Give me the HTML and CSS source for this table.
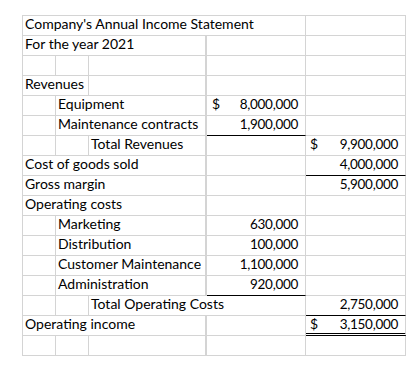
FILE: index.html
```html
<!DOCTYPE html>
<html>
<head>
<meta charset="utf-8">
<link rel="stylesheet" href="styles.css">
</head>
<body>
<div class="sheet">
  <div class="cell s4">Company's Annual Income Statement</div><div class="cell"></div>

  <div class="cell s3 c">For the year 2021</div><div class="cell"></div><div class="cell"></div>

  <div class="cell"></div><div class="cell"></div><div class="cell c"></div><div class="cell"></div><div class="cell"></div>

  <div class="cell s2">Revenues</div><div class="cell c"></div><div class="cell"></div><div class="cell"></div>

  <div class="cell"></div><div class="cell s2 c">Equipment</div><div class="cell num d"><span>$</span><span class="amt">8,000,000</span></div><div class="cell"></div>

  <div class="cell"></div><div class="cell s2 c">Maintenance contracts</div><div class="cell num d under"><span></span><span class="amt">1,900,000</span></div><div class="cell"></div>

  <div class="cell"></div><div class="cell"></div><div class="cell c ind">Total Revenues</div><div class="cell"></div><div class="cell num"><span>$</span><span class="amt">9,900,000</span></div>

  <div class="cell s3 c">Cost of goods sold</div><div class="cell"></div><div class="cell num under"><span></span><span class="amt">4,000,000</span></div>

  <div class="cell s3 c">Gross margin</div><div class="cell"></div><div class="cell num"><span></span><span class="amt">5,900,000</span></div>

  <div class="cell s3 c">Operating costs</div><div class="cell"></div><div class="cell"></div>

  <div class="cell"></div><div class="cell s2 c">Marketing</div><div class="cell num d"><span></span><span class="amt">630,000</span></div><div class="cell"></div>

  <div class="cell"></div><div class="cell s2 c">Distribution</div><div class="cell num d"><span></span><span class="amt">100,000</span></div><div class="cell"></div>

  <div class="cell"></div><div class="cell s2 c">Customer Maintenance</div><div class="cell num d"><span></span><span class="amt">1,100,000</span></div><div class="cell"></div>

  <div class="cell"></div><div class="cell s2 c">Administration</div><div class="cell num d under"><span></span><span class="amt">920,000</span></div><div class="cell"></div>

  <div class="cell"></div><div class="cell"></div><div class="cell s2 ind">Total Operating Costs</div><div class="cell num under"><span></span><span class="amt">2,750,000</span></div>

  <div class="cell s3 c">Operating income</div><div class="cell"></div><div class="cell num dbl"><span>$</span><span class="amt">3,150,000</span></div>

  <div class="cell"></div><div class="cell"></div><div class="cell c"></div><div class="cell"></div><div class="cell"></div>
</div>
</body>
</html>
```

FILE: styles.css
```css
html, body {
  margin: 0;
  padding: 0;
  background: #ffffff;
}

body {
  padding: 15px 0 0 22px;
  font-family: "Lato", "Liberation Sans", sans-serif;
  font-size: 14px;
  color: #000000;
}

.sheet {
  display: grid;
  grid-template-columns: 33px 33px 118px 99px 100px;
  grid-auto-rows: 20px;
  width: 383px;
  border-top: 1px solid #d4d4d4;
  border-left: 1px solid #d4d4d4;
}

.cell {
  box-sizing: border-box;
  border-right: 1px solid #d4d4d4;
  border-bottom: 1px solid #d4d4d4;
  padding: 0 0 3px 2px;
  display: flex;
  align-items: flex-end;
  white-space: nowrap;
  line-height: 16px;
}

.c {
  border-right-width: 2px;
}

.s2 { grid-column: span 2; }
.s3 { grid-column: span 3; }
.s4 { grid-column: span 4; }

.num {
  justify-content: space-between;
  padding: 0 7px 3px 4px;
}

.num.d {
  padding-left: 5px;
}

.amt {
  font-size: 13.5px;
  letter-spacing: -0.3px;
}

.under {
  border-bottom-color: #000000;
}

.dbl {
  border-bottom: 3px double #000000;
  padding-bottom: 1px;
}
```
